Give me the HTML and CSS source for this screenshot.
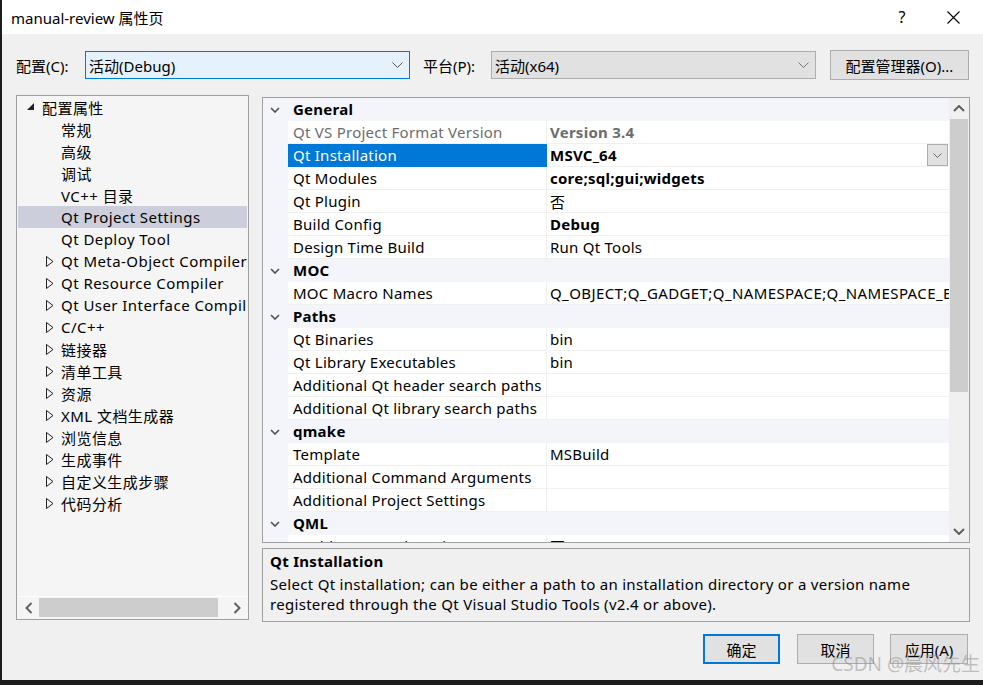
FILE: index.html
```html
<!DOCTYPE html>
<html lang="zh-CN">
<head>
<meta charset="utf-8">
<title>manual-review 属性页</title>
<link rel="stylesheet" href="styles.css">
</head>
<body>
<div class="window">
  <div class="titlebar">
    <span class="title">manual-review 属性页</span>
    <span class="help">?</span>
    <span class="close"><svg width="13" height="13" viewBox="0 0 13 13"><path d="M0.5 0.5 L12.5 12.5 M12.5 0.5 L0.5 12.5" stroke="#000" stroke-width="1.1" fill="none"/></svg></span>
  </div>

  <div class="config-row">
    <span class="lbl">配置(C):</span>
    <div class="combo combo-active"><span class="combo-text">活动(Debug)</span><svg class="chev" width="11" height="6" viewBox="0 0 11 6"><path d="M0.5 0.5 L5.5 5.5 L10.5 0.5" stroke="#555" fill="none"/></svg></div>
    <span class="lbl lbl-plat">平台(P):</span>
    <div class="combo"><span class="combo-text">活动(x64)</span><svg class="chev" width="11" height="6" viewBox="0 0 11 6"><path d="M0.5 0.5 L5.5 5.5 L10.5 0.5" stroke="#777" fill="none"/></svg></div>
    <button class="btn btn-cfg">配置管理器(O)...</button>
  </div>

  <div class="main">
    <div class="tree">
      <div class="tree-list">
        <div class="trow lvl0"><span class="tg"><svg width="7" height="7" viewBox="0 0 7 7"><path d="M7 0 L7 7 L0 7 Z" fill="#222"/></svg></span>配置属性</div>
        <div class="trow lvl1"><span class="tg"></span>常规</div>
        <div class="trow lvl1"><span class="tg"></span>高级</div>
        <div class="trow lvl1"><span class="tg"></span>调试</div>
        <div class="trow lvl1"><span class="tg"></span>VC++ 目录</div>
        <div class="trow lvl1 sel"><span class="tg"></span>Qt Project Settings</div>
        <div class="trow lvl1"><span class="tg"></span>Qt Deploy Tool</div>
        <div class="trow lvl1"><span class="tg"><svg width="8" height="11" viewBox="0 0 8 11"><path d="M0.5 0.5 L7 5.5 L0.5 10.5 Z" fill="none" stroke="#222"/></svg></span>Qt Meta-Object Compiler</div>
        <div class="trow lvl1"><span class="tg"><svg width="8" height="11" viewBox="0 0 8 11"><path d="M0.5 0.5 L7 5.5 L0.5 10.5 Z" fill="none" stroke="#222"/></svg></span>Qt Resource Compiler</div>
        <div class="trow lvl1"><span class="tg"><svg width="8" height="11" viewBox="0 0 8 11"><path d="M0.5 0.5 L7 5.5 L0.5 10.5 Z" fill="none" stroke="#222"/></svg></span>Qt User Interface Compiler</div>
        <div class="trow lvl1"><span class="tg"><svg width="8" height="11" viewBox="0 0 8 11"><path d="M0.5 0.5 L7 5.5 L0.5 10.5 Z" fill="none" stroke="#222"/></svg></span>C/C++</div>
        <div class="trow lvl1"><span class="tg"><svg width="8" height="11" viewBox="0 0 8 11"><path d="M0.5 0.5 L7 5.5 L0.5 10.5 Z" fill="none" stroke="#222"/></svg></span>链接器</div>
        <div class="trow lvl1"><span class="tg"><svg width="8" height="11" viewBox="0 0 8 11"><path d="M0.5 0.5 L7 5.5 L0.5 10.5 Z" fill="none" stroke="#222"/></svg></span>清单工具</div>
        <div class="trow lvl1"><span class="tg"><svg width="8" height="11" viewBox="0 0 8 11"><path d="M0.5 0.5 L7 5.5 L0.5 10.5 Z" fill="none" stroke="#222"/></svg></span>资源</div>
        <div class="trow lvl1"><span class="tg"><svg width="8" height="11" viewBox="0 0 8 11"><path d="M0.5 0.5 L7 5.5 L0.5 10.5 Z" fill="none" stroke="#222"/></svg></span>XML 文档生成器</div>
        <div class="trow lvl1"><span class="tg"><svg width="8" height="11" viewBox="0 0 8 11"><path d="M0.5 0.5 L7 5.5 L0.5 10.5 Z" fill="none" stroke="#222"/></svg></span>浏览信息</div>
        <div class="trow lvl1"><span class="tg"><svg width="8" height="11" viewBox="0 0 8 11"><path d="M0.5 0.5 L7 5.5 L0.5 10.5 Z" fill="none" stroke="#222"/></svg></span>生成事件</div>
        <div class="trow lvl1"><span class="tg"><svg width="8" height="11" viewBox="0 0 8 11"><path d="M0.5 0.5 L7 5.5 L0.5 10.5 Z" fill="none" stroke="#222"/></svg></span>自定义生成步骤</div>
        <div class="trow lvl1"><span class="tg"><svg width="8" height="11" viewBox="0 0 8 11"><path d="M0.5 0.5 L7 5.5 L0.5 10.5 Z" fill="none" stroke="#222"/></svg></span>代码分析</div>
      </div>
      <div class="hscroll">
        <span class="sarrow"><svg width="8" height="12" viewBox="0 0 8 12"><path d="M6.5 1 L1.5 6 L6.5 11" stroke="#606060" stroke-width="2" fill="none"/></svg></span>
        <div class="htrack"><div class="hthumb"></div></div>
        <span class="sarrow"><svg width="8" height="12" viewBox="0 0 8 12"><path d="M1.5 1 L6.5 6 L1.5 11" stroke="#606060" stroke-width="2" fill="none"/></svg></span>
      </div>
    </div>

    <div class="right">
      <div class="grid">
        <div class="grid-rows">
          <div class="cat"><span class="cat-chev"><svg width="10" height="6" viewBox="0 0 10 6"><path d="M1 1 L5 5 L9 1" stroke="#505050" stroke-width="1.6" fill="none"/></svg></span>General</div>
          <div class="prow"><span class="pn dim">Qt VS Project Format Version</span><span class="pv b dim">Version 3.4</span></div>
          <div class="prow"><span class="pn selcell">Qt Installation</span><span class="pv b">MSVC_64<span class="ddbtn"><svg width="9" height="5" viewBox="0 0 9 5"><path d="M0.5 0.5 L4.5 4.5 L8.5 0.5" stroke="#666" fill="none"/></svg></span></span></div>
          <div class="prow"><span class="pn">Qt Modules</span><span class="pv b">core;sql;gui;widgets</span></div>
          <div class="prow"><span class="pn">Qt Plugin</span><span class="pv">否</span></div>
          <div class="prow"><span class="pn">Build Config</span><span class="pv b">Debug</span></div>
          <div class="prow"><span class="pn">Design Time Build</span><span class="pv">Run Qt Tools</span></div>
          <div class="cat"><span class="cat-chev"><svg width="10" height="6" viewBox="0 0 10 6"><path d="M1 1 L5 5 L9 1" stroke="#505050" stroke-width="1.6" fill="none"/></svg></span>MOC</div>
          <div class="prow"><span class="pn">MOC Macro Names</span><span class="pv mono-w">Q_OBJECT;Q_GADGET;Q_NAMESPACE;Q_NAMESPACE_EXPORT</span></div>
          <div class="cat"><span class="cat-chev"><svg width="10" height="6" viewBox="0 0 10 6"><path d="M1 1 L5 5 L9 1" stroke="#505050" stroke-width="1.6" fill="none"/></svg></span>Paths</div>
          <div class="prow"><span class="pn">Qt Binaries</span><span class="pv">bin</span></div>
          <div class="prow"><span class="pn">Qt Library Executables</span><span class="pv">bin</span></div>
          <div class="prow"><span class="pn">Additional Qt header search paths</span><span class="pv"></span></div>
          <div class="prow"><span class="pn">Additional Qt library search paths</span><span class="pv"></span></div>
          <div class="cat"><span class="cat-chev"><svg width="10" height="6" viewBox="0 0 10 6"><path d="M1 1 L5 5 L9 1" stroke="#505050" stroke-width="1.6" fill="none"/></svg></span>qmake</div>
          <div class="prow"><span class="pn">Template</span><span class="pv">MSBuild</span></div>
          <div class="prow"><span class="pn">Additional Command Arguments</span><span class="pv"></span></div>
          <div class="prow"><span class="pn">Additional Project Settings</span><span class="pv"></span></div>
          <div class="cat"><span class="cat-chev"><svg width="10" height="6" viewBox="0 0 10 6"><path d="M1 1 L5 5 L9 1" stroke="#505050" stroke-width="1.6" fill="none"/></svg></span>QML</div>
          <div class="prow"><span class="pn">Enable QML Debugging</span><span class="pv">否</span></div>
        </div>
        <div class="vscroll">
          <span class="varrow"><svg width="12" height="7" viewBox="0 0 12 7"><path d="M1 6 L6 1 L11 6" stroke="#606060" stroke-width="2" fill="none"/></svg></span>
          <div class="vtrack"><div class="vthumb"></div></div>
          <span class="varrow"><svg width="12" height="7" viewBox="0 0 12 7"><path d="M1 1 L6 6 L11 1" stroke="#606060" stroke-width="2" fill="none"/></svg></span>
        </div>
      </div>
      <div class="desc">
        <div class="desc-title">Qt Installation</div>
        <div class="desc-text">Select Qt installation; can be either a path to an installation directory or a version name registered through the Qt Visual Studio Tools (v2.4 or above).</div>
      </div>
    </div>
  </div>

  <div class="buttons">
    <button class="btn btn-ok">确定</button>
    <button class="btn btn-cancel">取消</button>
    <button class="btn btn-apply">应用(A)</button>
  </div>
  <div class="watermark">CSDN @晨风先生</div>
</div>
</body>
</html>
```

FILE: styles.css
```css
* { box-sizing: border-box; }
html, body { margin: 0; padding: 0; }
body {
  background: #1c1c1c;
  width: 983px;
  height: 685px;
  overflow: hidden;
  font-family: "Noto Sans", "Noto Sans CJK SC", sans-serif;
  font-size: 15px;
  letter-spacing: 0.3px;
  color: #000;
}
.window {
  position: relative;
  margin-left: 2px;
  width: 981px;
  height: 680px;
  background: #f0f0f0;
  display: flex;
  flex-direction: column;
}
.titlebar {
  height: 34px;
  flex: none;
  background: #fff;
  display: flex;
  align-items: center;
  padding-left: 9px;
  letter-spacing: 0;
}
.title { font-size: 15px; flex: 1; }
.help { width: 20px; margin-right: 35px; text-align: center; font-size: 16px; }
.close { width: 13px; margin-right: 23px; display: flex; }

.config-row {
  display: flex;
  align-items: center;
  padding: 17px 0 0 14px;
  height: 45px;
  flex: none;
  letter-spacing: 0;
}
.lbl { width: 69px; }
.lbl-plat { width: 68px; margin-left: 13px; }
.combo {
  width: 325px;
  height: 28px;
  border: 1px solid #adadad;
  background: #e1e1e1;
  display: flex;
  align-items: center;
  padding: 0 6px 0 3px;
}
.combo-active { background: #e5f1fb; border-color: #0078d7; }
.combo-text { flex: 1; }
.btn {
  font-family: inherit;
  font-size: 15px;
  color: #000;
  background: #e1e1e1;
  border: 1px solid #adadad;
  padding: 0;
  letter-spacing: 0;
}
.btn-cfg { width: 139px; height: 30px; margin-left: 14px; }

.main {
  display: flex;
  align-items: flex-start;
  padding-left: 14px;
  margin-top: 16px;
  flex: none;
}
.tree {
  width: 233px;
  height: 525px;
  border: 1px solid #a0a0a0;
  background: #f5f5f5;
  display: flex;
  flex-direction: column;
}
.tree-list { flex: 1; overflow: hidden; }
.trow {
  height: 22px;
  margin: 0 1px;
  display: flex;
  align-items: center;
  white-space: nowrap;
  overflow: hidden;
  letter-spacing: 0.45px;
}
.trow.lvl0 { padding-left: 9px; }
.trow.lvl1 { padding-left: 28px; }
.tg { width: 15px; flex: none; display: flex; align-items: center; }
.lvl0 .tg { padding-bottom: 2px; }
.trow.sel { background: #cccedb; }

.hscroll {
  height: 22px;
  border-top: 1px solid #fff;
  display: flex;
  align-items: center;
  margin: 0 1px 1px 1px;
}
.sarrow { width: 21px; display: flex; justify-content: center; }
.htrack { flex: 1; height: 19px; }
.hthumb { width: 179px; height: 19px; background: #cdcdcd; }

.right {
  margin-left: 13px;
  margin-top: 2px;
  width: 708px;
  display: flex;
  flex-direction: column;
}
.grid {
  height: 446px;
  border: 1px solid #a0a0a0;
  background: #fff;
  display: flex;
  letter-spacing: 0.25px;
}
.grid-rows { width: 686px; overflow: hidden; }
.cat {
  height: 23px;
  background: #f3f5fa;
  display: flex;
  align-items: center;
  font-weight: 700;
  padding-left: 7px;
  padding-bottom: 1px;
}
.cat-chev { width: 23px; display: flex; padding-top: 1px; }
.prow {
  height: 23px;
  display: flex;
  padding-left: 25px;
  background: #f3f5fa;
}
.pn, .pv {
  height: 23px;
  background: #fff;
  border-bottom: 1px solid #f0f0f0;
  display: flex;
  align-items: center;
  white-space: nowrap;
  overflow: hidden;
}
.pn { width: 259px; padding-left: 5px; border-right: 1px solid #f0f0f0; }
.pv { flex: 1; padding-left: 3px; position: relative; }
.mono-w { letter-spacing: 0.4px; }
.b { font-weight: 700; }
.dim { color: #6d6d6d; }
.pn.selcell { background: #0078d7; color: #fff; border-color: #0078d7; }
.ddbtn {
  position: absolute;
  right: 1px;
  top: 0;
  width: 21px;
  height: 22px;
  background: #e1e1e1;
  border: 1px solid #adadad;
  display: flex;
  align-items: center;
  justify-content: center;
}
.vscroll {
  width: 20px;
  background: #f0f0f0;
  display: flex;
  flex-direction: column;
  align-items: center;
}
.varrow { height: 21px; display: flex; align-items: center; justify-content: center; }
.vtrack { flex: 1; width: 18px; }
.vthumb { width: 18px; height: 273px; background: #cdcdcd; }

.desc {
  margin-top: 5px;
  height: 74px;
  border: 1px solid #a0a0a0;
  background: #f0f0f0;
  padding: 2px 7px 0 7px;
  line-height: 20px;
}
.desc-title { font-weight: 700; margin-bottom: 3px; }

.buttons {
  display: flex;
  justify-content: flex-end;
  padding-right: 15px;
  margin-top: 12px;
  flex: none;
}
.btn-ok { width: 77px; height: 30px; border: 2px solid #0078d7; }
.btn-cancel { width: 77px; height: 30px; margin-left: 17px; }
.btn-apply { width: 78px; height: 30px; margin-left: 16px; }

.watermark {
  position: absolute;
  right: 3px;
  bottom: 3px;
  font-size: 19px;
  letter-spacing: 0;
  color: rgba(140, 140, 140, 0.5);
  white-space: nowrap;
}
```
